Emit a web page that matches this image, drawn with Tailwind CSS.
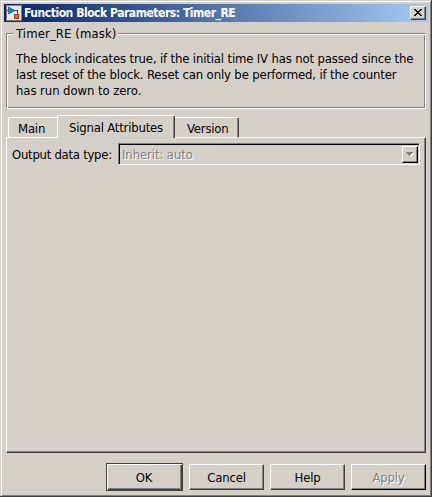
<!DOCTYPE html>
<html lang="en">
<head>
<meta charset="utf-8">
<title>Function Block Parameters: Timer_RE</title>
<script src="https://cdn.jsdelivr.net/npm/@tailwindcss/browser@4"></script>
</head>
<body class="bg-[#d4d0c8]">
<main class="w-[432px] h-[497px] overflow-hidden bg-[#d4d0c8] pl-px pt-px border-r border-b border-[#404040] text-black text-[13px] leading-4 font-['DejaVu_Sans_Condensed','DejaVu_Sans',sans-serif] [font-stretch:condensed] whitespace-nowrap">
  <div class="w-full h-full border border-l-white border-t-white border-r-[#808080] border-b-[#808080] pl-[2px] pt-[2px] flex flex-col">
    <header class="w-[424px] h-[18px] shrink-0 flex items-center pl-[2px] pr-[2px] bg-linear-to-r from-[#0a246a] to-[#a6caf0] text-white font-bold">
      <svg class="w-4 h-4 shrink-0" viewBox="0 0 16 16" shape-rendering="crispEdges">
        <rect width="16" height="16" fill="#7c7c84"/><rect x="1" y="1" width="14" height="14" fill="#e9e6df"/>
        <path d="M1 5.5H3M9 5.5H11.5V9" stroke="#304858" fill="none"/>
        <path d="M2.500 2V9L9 5.5Z" fill="#2385bd" stroke="#185b86" stroke-width=".7" shape-rendering="auto"/>
        <rect x="8" y="9" width="5" height="5" fill="#ed6236"/><path d="M8.5 9.5H12.500V13.500H8.500Z" stroke="#a9381b" fill="none"/>
      </svg>
      <h1 class="ml-[2px] text-[12px] leading-[18px] tracking-[-0.46px]">Function Block Parameters: Timer_RE</h1>
      <button aria-label="Close" class="ml-auto w-4 h-[14px] border border-l-white border-t-white border-r-[#404040] border-b-[#404040] bg-[#d4d0c8] shadow-[inset_-1px_-1px_#808080] flex items-start pl-[3px] pt-[2px]">
        <svg class="w-2 h-[7px]" viewBox="0 0 8 7" shape-rendering="crispEdges"><path d="M0 0h2v1h1v1h2V1h1V0h2v1H7v1H6v1H5v1h1v1h1v1h1v1H6V6H5V5H3v1H2v1H0V6h1V5h1V4h1V3H2V2H1V1H0Z" fill="#000"/></svg>
      </button>
    </header>

    <section class="ml-[2px] mt-[11px] w-[420px] h-[76px] shrink-0 border border-[#808080] border-r-white border-b-white shadow-[inset_1px_1px_white,inset_-1px_-1px_#808080]">
      <h2 class="relative -top-[8px] ml-[6px] w-[105px] h-4 bg-[#d4d0c8] pl-[3px] tracking-[0.1px]">Timer_RE (mask)</h2>
      <div class="pl-[9px] pt-[1px]">
        <p class="tracking-[-0.16px]">The block indicates true, if the initial time IV has not passed since the</p>
        <p class="tracking-[-0.14px]">last reset of the block. Reset can only be performed, if the counter</p>
        <p class="tracking-[-0.08px]">has run down to zero.</p>
      </div>
    </section>

    <nav class="relative z-10 ml-[4px] mt-[6px] -mb-px h-[23px] shrink-0 flex items-end">
      <div class="h-[21px] w-[49px] border-l border-t border-b border-white rounded-tl-[2px] pl-[9px] pt-[3px] tracking-[-0.2px]">Main</div>
      <div class="h-[23px] w-[118px] border-l border-t border-l-white border-t-white border-r border-r-[#404040] rounded-t-[2px] bg-[#d4d0c8] shadow-[inset_-1px_0_#808080] pl-[11px] pt-[4px] tracking-[-0.2px]">Signal Attributes</div>
      <div class="h-[21px] w-[64px] border-t border-t-white border-b border-b-white border-r border-r-[#404040] rounded-tr-[2px] shadow-[inset_-1px_0_#808080] pl-[12px] pt-[3px] tracking-[-0.2px]">Version</div>
    </nav>
    <section class="ml-[2px] w-[420px] h-[316px] shrink-0 border border-l-white border-t-white border-r-[#404040] border-b-[#404040] shadow-[inset_-1px_-1px_#808080] pt-[5px] pl-[5px] flex items-start">
      <label class="w-[106px] pt-[4px] tracking-[-0.27px]">Output data type:</label>
      <div class="w-[302px] h-[22px] border border-l-[#808080] border-t-[#808080] border-r-white border-b-white shadow-[inset_1px_1px_black] flex pl-[3px] text-[#808080]">
        <span class="pt-[3px] tracking-[-0.1px] [text-shadow:1px_1px_white]">Inherit: auto</span>
        <div class="ml-auto mr-px mt-[2px] w-4 h-[17px] border border-l-white border-t-white border-r-black border-b-black shadow-[inset_-1px_-1px_#808080] pl-[3px] pt-[5px]">
          <svg class="w-[9px] h-[6px]" viewBox="0 0 9 6" shape-rendering="crispEdges"><path d="M1 1h7v1H7v1H6v1H5v1H4V4H3V3H2V2H1Z" fill="white"/><path d="M0 0h7v1H6v1H5v1H4v1H3V3H2V2H1V1H0Z" fill="#808080"/></svg>
        </div>
      </div>
    </section>
    <footer class="mt-[10px] ml-[102px] flex items-center gap-[6px] h-7 tracking-[-0.2px]">
      <button class="w-[77px] h-7 border border-[#404040] shadow-[inset_1px_1px_white,inset_-1px_-1px_#404040,inset_-2px_-2px_#808080] pr-px pt-[2px]">OK</button>
      <button class="w-[75px] h-[26px] border border-l-white border-t-white border-r-[#404040] border-b-[#404040] shadow-[inset_-1px_-1px_#808080] pt-[2px]">Cancel</button>
      <button class="w-[75px] h-[26px] border border-l-white border-t-white border-r-[#404040] border-b-[#404040] shadow-[inset_-1px_-1px_#808080] pt-[2px]">Help</button>
      <button disabled class="w-[75px] h-[26px] border border-l-white border-t-white border-r-black border-b-black shadow-[inset_-1px_-1px_#808080] pt-[2px] text-[#808080] [text-shadow:1px_1px_white]">Apply</button>
    </footer>
  </div>
</main>
</body>
</html>
